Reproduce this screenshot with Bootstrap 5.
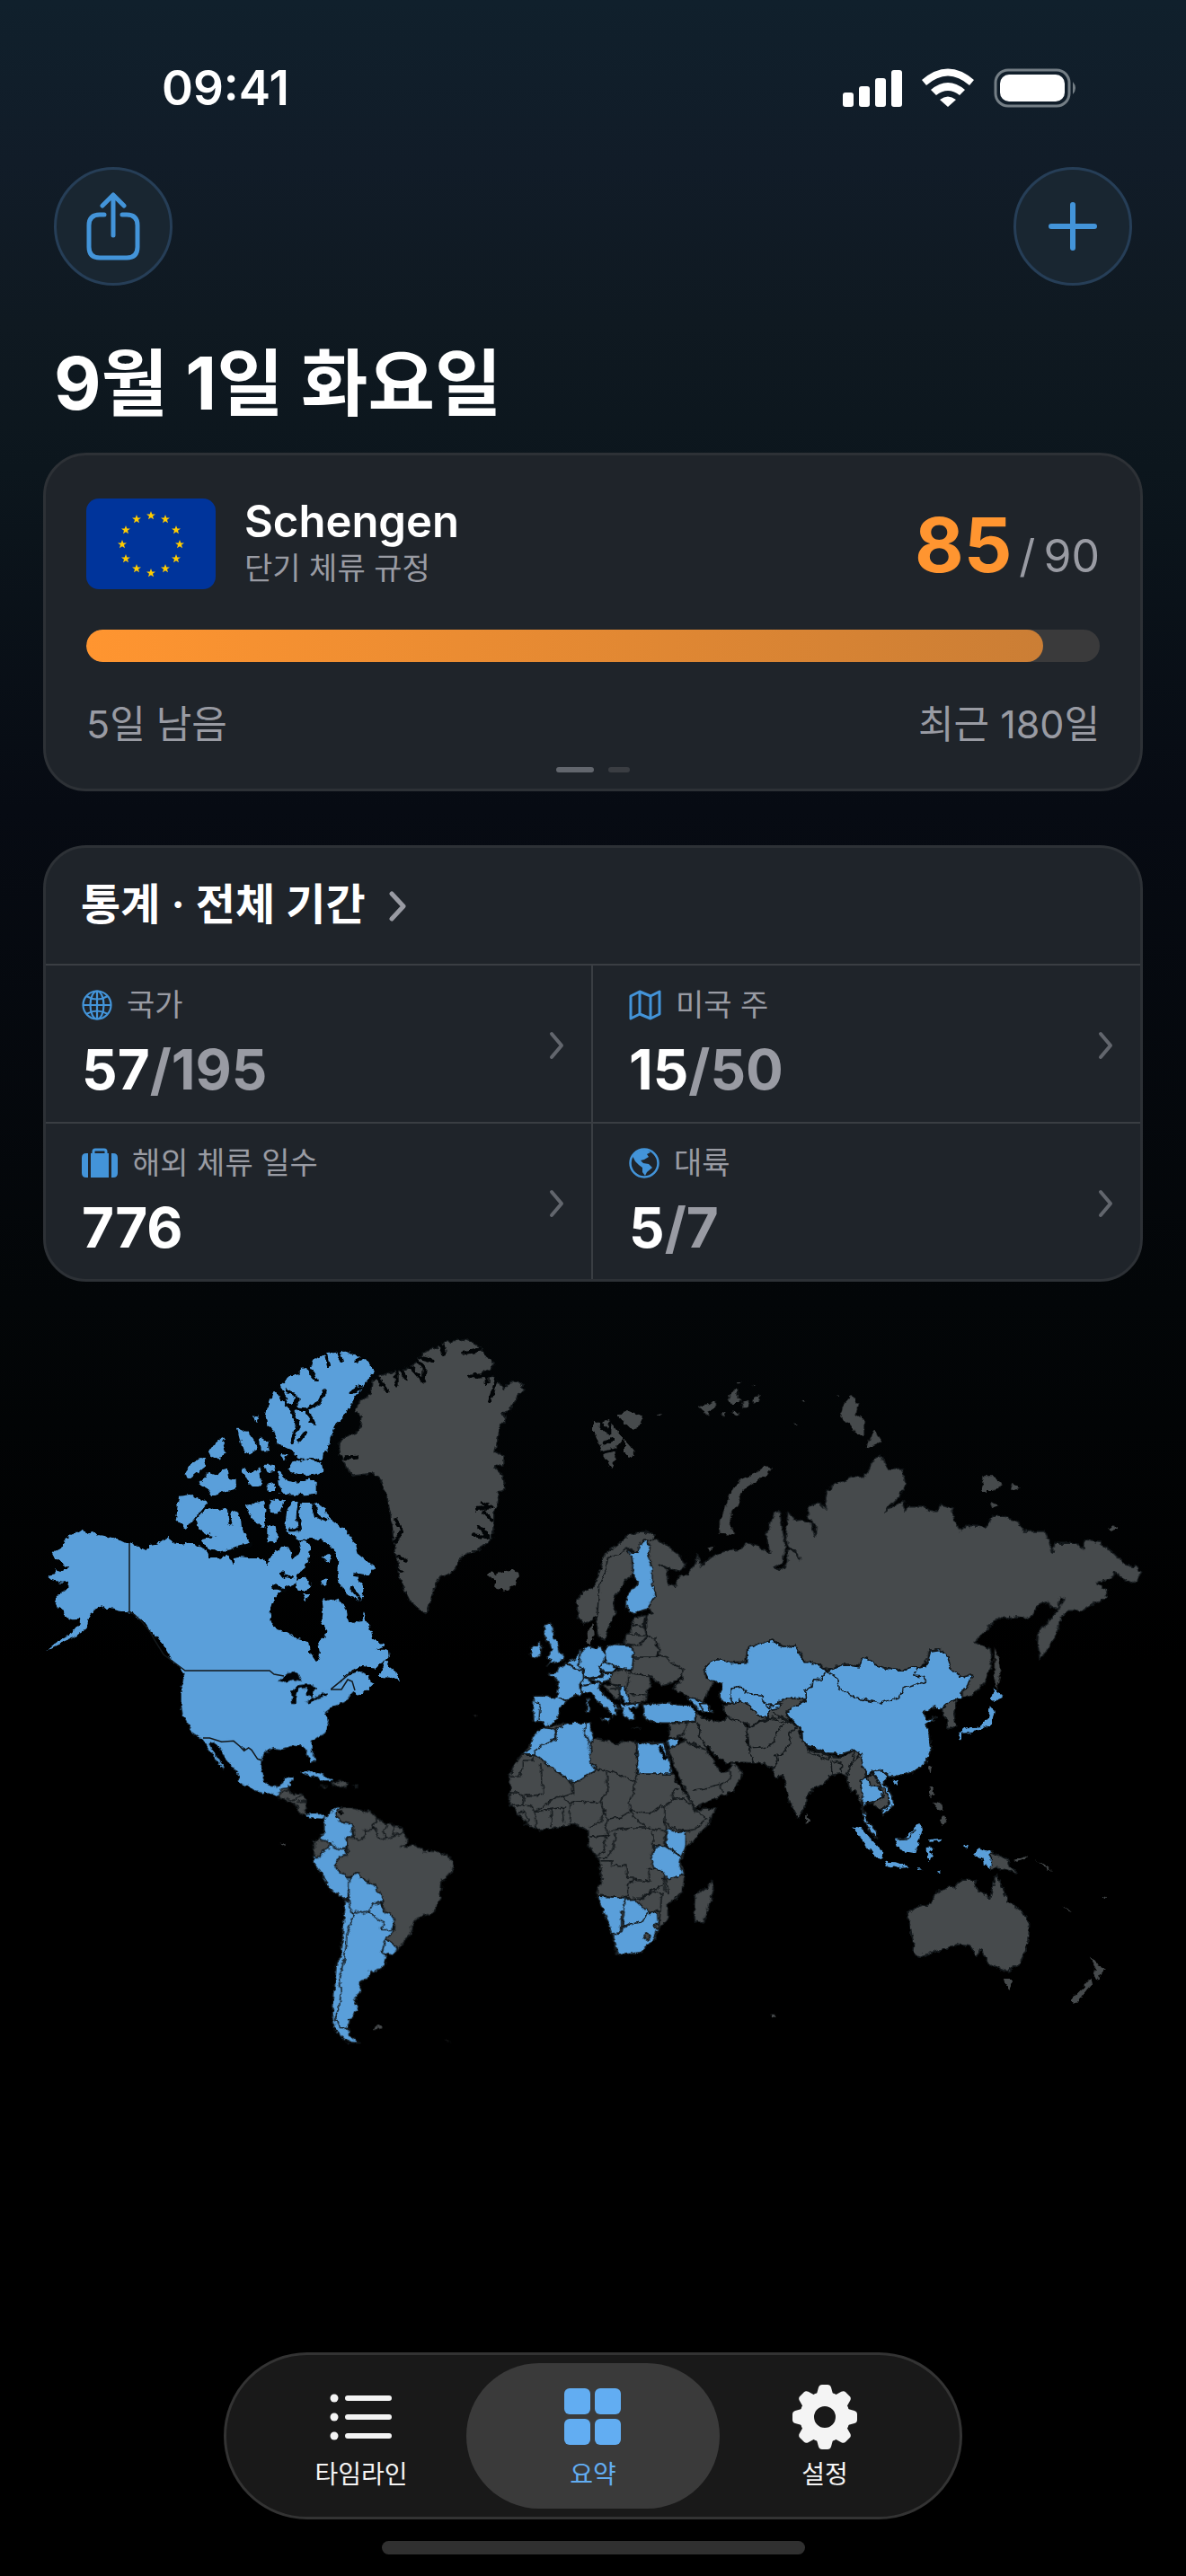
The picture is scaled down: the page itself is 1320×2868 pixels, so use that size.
<!DOCTYPE html>
<html lang="ko" data-bs-theme="dark">
<head>
<meta charset="utf-8">
<meta name="viewport" content="width=device-width, initial-scale=1">
<title>여행 요약</title>
<link href="https://cdn.jsdelivr.net/npm/bootstrap@5.3.0/dist/css/bootstrap.min.css" rel="stylesheet">
<style>
body{font-family:Inter,"Noto Sans CJK KR",sans-serif;color:#fff;background:#000 linear-gradient(180deg,#10202c 0,#111c28 180px,#0f1921 360px,#0c161d 520px,#070b13 900px,#030608 1450px,#000 1850px) no-repeat;min-height:100vh}
.screen{min-height:100vh}
.statusbar{height:186px;padding:10px 118px 0 180px}
.clock{font-size:53px;font-weight:600;line-height:64px}
.topbar{padding:0 60px}
.round-btn{width:132px;height:132px;border-radius:50%;background:#192631;border:3px solid #263e57;color:#4394d9}
.round-btn:hover{background:#20303d;color:#4394d9;border-color:#263e57}
.page-title{font-size:81px;font-weight:700;line-height:96px;margin:61px 0 0;padding:0 60px}
.panels{padding:0 48px}
.panel{background:#1f242a;border:3px solid #2d3136;border-radius:48px;overflow:hidden}
.rule-card{margin-top:29px;height:377px;padding:46px 45px 0}
.muted{color:#999ba3}
.flag{border-radius:14px}
.region{font-size:49px;font-weight:600;line-height:56px}
.sub-label{font-size:34px;line-height:48px}
.used{font-size:84px;font-weight:700;line-height:84px;color:#ff9530}
.limit{font-size:50px;line-height:50px}
.usage{height:36px;border-radius:18px;background:#3a3a3b;margin-top:44px}
.usage .progress-bar{border-radius:18px;background:linear-gradient(90deg,#ff9530,#cb7e35)}
.foot-text{font-size:43px;line-height:64px;margin-top:37px}
.dots{margin-top:16px}
.dot{height:6px;width:24px;border-radius:3px;background:#3a3d42}
.dot-on{width:42px;background:#62666d}
.stat-card{margin-top:60px}
.stat-head{height:131px;padding:0 39px;font-size:48px;font-weight:600;color:#fff;border-bottom:2px solid #3a3e43}
.stat-head span{line-height:64px;margin-bottom:4px}
.stat-cell{height:176px;padding:20px 0 0 40px;color:#fff;position:relative}
.stat-cell.low{height:173px}
.line-b{border-bottom:2px solid #3a3e43}
.line-r{border-right:2px solid #3a3e43}
.stat-name{font-size:34px;line-height:48px}
.stat-num{font-size:62px;font-weight:700;line-height:96px}
.chev{position:absolute;right:28px;top:72px}
.worldmap{margin-top:53px}
.worldmap path{vector-effect:non-scaling-stroke}
.b{fill:#5a9fda}.g{fill:#464a4c}
.land{stroke:#13181b;stroke-width:1.5;stroke-linejoin:round}
.arctic{stroke:#5a9fda;stroke-width:2}
.ln{fill:none;stroke:#13181b;stroke-width:1.5}
.sea{fill:none;stroke:#020507;stroke-width:4;stroke-linecap:round}
.tabs{width:822px;height:186px;border-radius:93px;background:#191919;border:3px solid #333;padding:9px}
.tab-btn{width:282px;height:162px;border-radius:81px;border:0;background:none;color:#f4f4f4;font-size:28px;line-height:40px;padding:6px 0 0}
.tab-btn+.tab-btn{margin-left:-24px}
.tab-btn svg{height:80px}
.tab-on{background:#3a3a3a;color:#62adf2}
.home{width:471px;height:15px;border-radius:8px;background:#303030;margin:24px auto}
</style>
<script src="https://cdn.jsdelivr.net/npm/bootstrap@5.3.0/dist/js/bootstrap.bundle.min.js"></script>
</head>
<body>
<div class="screen d-flex flex-column">
<header>
  <div class="statusbar d-flex justify-content-between align-items-center">
    <span class="clock">09:41</span>
    <svg width="264" height="44" viewBox="0 0 264 44" aria-hidden="true">
      <g fill="#fff"><rect y="27" width="12" height="16" rx="3"/><rect x="18" y="20" width="12" height="23" rx="3"/><rect x="36" y="11" width="12" height="32" rx="3"/><rect x="54" y="2" width="12" height="41" rx="3"/>
      <path d="M88 13Q117-12 146 13L141 19Q117-2 93 19ZM98 24Q117 8 136 24L130 30Q117 20 104 30ZM108 35Q117 28 126 35L117 43Z"/>
      <rect x="175" y="7" width="72" height="30" rx="10"/></g>
      <rect x="170" y="2" width="82" height="40" rx="14" fill="none" stroke="#747e85" stroke-width="3"/><path d="M256 15Q262 22 256 29Z" fill="#747e85"/>
    </svg>
  </div>
  <div class="topbar d-flex justify-content-between">
    <button class="round-btn btn p-0" type="button" aria-label="공유"><svg width="60" height="76" viewBox="0 0 60 76" fill="none" stroke="currentColor" stroke-width="5" stroke-linecap="round" stroke-linejoin="round"><path d="M20 25H15Q3 25 3 37V61Q3 73 15 73H45Q57 73 57 61V37Q57 25 45 25H40M30 48V3M18 15L30 3L42 15"/></svg></button>
    <button class="round-btn btn p-0" type="button" aria-label="추가"><svg width="56" height="56" viewBox="0 0 56 56" stroke="currentColor" stroke-width="6" stroke-linecap="round"><path d="M28 4V52M4 28H52"/></svg></button>
  </div>
  <h1 class="page-title">9월 1일 화요일</h1>
</header>
<main class="flex-grow-1">
  <div class="panels">
    <section class="panel rule-card">
      <div class="d-flex align-items-center">
        <svg class="flag me-3" width="144" height="101" viewBox="0 0 144 101" role="img" aria-label="EU">
          <rect width="144" height="101" fill="#00349b"/>
          <defs><path id="star" d="M0-5L1.300-1.500 5-1.500 2 .8 3 4.300 0 2.200-3 4.300-2 .8-5-1.500-1.300-1.500Z" fill="#fc0"/></defs>
          <use href="#star" x="72" y="19"/><use href="#star" x="88" y="23"/><use href="#star" x="100" y="35"/><use href="#star" x="104" y="51"/><use href="#star" x="100" y="67"/><use href="#star" x="88" y="78"/><use href="#star" x="72" y="83"/><use href="#star" x="56" y="78"/><use href="#star" x="44" y="67"/><use href="#star" x="40" y="51"/><use href="#star" x="44" y="35"/><use href="#star" x="56" y="23"/>
        </svg>
        <div class="ms-3"><div class="region">Schengen</div><div class="sub-label muted">단기 체류 규정</div></div>
        <div class="ms-auto pt-1 d-flex align-items-baseline"><span class="used">85</span><span class="limit muted ms-2">/&#8201;90</span></div>
      </div>
      <div class="progress usage" role="progressbar" aria-valuenow="85" aria-valuemin="0" aria-valuemax="90" aria-label="체류 일수"><div class="progress-bar" style="width:94.4%"></div></div>
      <div class="foot-text muted d-flex justify-content-between"><span>5일 남음</span><span>최근 180일</span></div>
      <div class="dots d-flex justify-content-center gap-3"><span class="dot dot-on"></span><span class="dot"></span></div>
    </section>
    <section class="panel stat-card">
      <a href="#stats" class="stat-head d-flex align-items-center text-decoration-none"><span>통계 · 전체 기간</span><svg class="ms-4" width="24" height="36" viewBox="0 0 24 36" fill="none" stroke="#999ba3" stroke-width="5" stroke-linecap="round" stroke-linejoin="round"><path d="M5 4L18 18L5 32"/></svg></a>
      <div class="row g-0">
        <a href="#countries" class="col-6 stat-cell line-b line-r text-decoration-none">
          <div class="stat-name muted d-flex align-items-center"><svg class="me-3" width="34" height="34" viewBox="0 0 34 34" fill="none" stroke="#4394d9" stroke-width="2.200"><circle cx="17" cy="17" r="15.500"/><ellipse cx="17" cy="17" rx="7.500" ry="15.500"/><path d="M17 1V33M1 17H33M5 7Q17 14 29 7M5 27Q17 20 29 27"/></svg>국가</div>
          <div class="stat-num">57<span class="muted">/195</span></div>
          <svg class="chev" width="20" height="34" viewBox="0 0 20 34" fill="none" stroke="#62666d" stroke-width="4" stroke-linecap="round" stroke-linejoin="round"><path d="M4 4L15 17L4 30"/></svg>
        </a>
        <a href="#states" class="col-6 stat-cell line-b text-decoration-none">
          <div class="stat-name muted d-flex align-items-center"><svg class="me-3" width="36" height="34" viewBox="0 0 36 34" fill="none" stroke="#4394d9" stroke-width="3" stroke-linejoin="round"><path d="M2 7L12 2L24 7L34 2V27L24 32L12 27L2 32ZM12 2V27M24 7V32"/></svg>미국 주</div>
          <div class="stat-num">15<span class="muted">/50</span></div>
          <svg class="chev" width="20" height="34" viewBox="0 0 20 34" fill="none" stroke="#62666d" stroke-width="4" stroke-linecap="round" stroke-linejoin="round"><path d="M4 4L15 17L4 30"/></svg>
        </a>
        <a href="#days" class="col-6 stat-cell low line-r text-decoration-none">
          <div class="stat-name muted d-flex align-items-center"><svg class="me-3" width="40" height="34" viewBox="0 0 40 34" fill="#4394d9"><path d="M5 6H7V33H5Q0 33 0 28V11Q0 6 5 6ZM33 6H35Q40 6 40 11V28Q40 33 35 33H33ZM10 6H30V33H10Z"/><path d="M13 7V4Q13 2 15 2H25Q27 2 27 4V7" fill="none" stroke="#4394d9" stroke-width="3"/></svg>해외 체류 일수</div>
          <div class="stat-num">776</div>
          <svg class="chev" width="20" height="34" viewBox="0 0 20 34" fill="none" stroke="#62666d" stroke-width="4" stroke-linecap="round" stroke-linejoin="round"><path d="M4 4L15 17L4 30"/></svg>
        </a>
        <a href="#continents" class="col-6 stat-cell low text-decoration-none">
          <div class="stat-name muted d-flex align-items-center"><svg class="me-3" width="34" height="34" viewBox="0 0 34 34"><circle cx="17" cy="17" r="15.500" fill="none" stroke="#4394d9" stroke-width="2.500"/><path d="M4 9Q10 1 20 2L24 5 20 7 22 10 17 13 13 14 16 17 22 18 26 22 20 27 18 31 15 27 15 22 11 19 7 15Z" fill="#4394d9"/></svg>대륙</div>
          <div class="stat-num">5<span class="muted">/7</span></div>
          <svg class="chev" width="20" height="34" viewBox="0 0 20 34" fill="none" stroke="#62666d" stroke-width="4" stroke-linecap="round" stroke-linejoin="round"><path d="M4 4L15 17L4 30"/></svg>
        </a>
      </div>
    </section>
  </div>
  <svg class="worldmap d-block w-100" viewBox="0 1480 1320 820" role="img" aria-label="방문한 국가 세계 지도">
    <defs><filter id="coast" x="-2%" y="-2%" width="104%" height="104%" color-interpolation-filters="sRGB"><feTurbulence type="fractalNoise" baseFrequency=".16" numOctaves="3" seed="4"/><feDisplacementMap in="SourceGraphic" scale="6" xChannelSelector="R" yChannelSelector="G"/></filter></defs>
    <g class="land" filter="url(#coast)">
      <!-- Arctic Canada, Alaska, Canada -->
      <g class="b" transform="translate(30 1470) scale(.33333)">
        <path stroke="none" d="M346 745 325 742 300 730 275 724 245 718 220 708 205 712 183 698 165 710 150 712 125 735 115 760 85 775 95 795 120 812 140 828 120 838 90 832 100 845 68 853 85 868 115 875 138 872 135 900 110 912 90 935 100 955 125 970 130 992 155 1000 178 998 175 1015 150 1045 100 1075 60 1105 110 1080 160 1058 200 1025 205 1000 225 965 250 952 262 962 290 965 310 972 346 972Z"/>
        <path stroke="none" d="M341 745 365 752 398 768 410 750 440 745 475 722 490 745 515 748 540 740 575 755 600 770 610 795 640 795 675 785 690 822 690 795 720 790 760 795 790 795 800 820 808 795 830 770 850 760 875 760 890 800 905 780 915 760 910 740 935 735 945 760 940 800 925 830 900 850 895 880 850 900 825 930 812 975 815 1005 835 1035 870 1042 905 1065 940 1075 945 1110 965 1140 978 1115 972 1075 995 1060 1000 1035 985 1005 990 965 985 930 1005 935 1030 930 1055 945 1065 970 1068 1000 1090 1015 1120 1000 1125 975 1135 1010 1150 1040 1155 1065 1180 1080 1195 1085 1165 1100 1205 1100 1208 1125 1195 1140 1165 1160 1120 1155 1090 1165 1060 1190 1040 1215 1070 1185 1110 1172 1145 1185 1140 1200 1160 1212 1135 1236 1110 1252 1090 1240 960 1275 880 1230 808 1185 530 1185 515 1160 490 1145 470 1110 450 1075 430 1055 400 1020 375 990 341 975Z"/>
        <path class="arctic" d="M1180 1188 1200 1140 1208 1160 1235 1180 1240 1200 1215 1190ZM848 215 880 190 905 185 915 165 945 160 965 130 1000 115 1060 107 1100 120 1130 135 1155 165 1140 190 1115 225 1080 275 1055 320 1025 350 1010 390 1005 430 985 435 980 465 960 455 935 460 905 455 895 435 870 425 840 410 830 370 805 350 800 320 810 280 825 240 845 265 875 270 860 240Z"/>
        <path class="arctic" d="M875 500 885 480 930 465 980 480 985 505 945 515 900 508ZM840 505 870 540 905 545 940 532 965 540 965 575 930 580 850 575ZM705 362 735 375 760 410 765 430 740 445 720 420ZM780 395 805 410 805 430 785 430ZM610 440 630 410 660 395 650 420 660 440 640 460 615 450ZM530 515 550 480 580 462 595 465 590 490 570 505 545 525ZM580 545 610 510 640 520 665 495 670 530 695 535 695 560 650 570 620 582 605 560ZM720 500 750 515 775 500 780 545 760 555 735 530ZM795 485 820 485 825 500 805 505ZM805 550 825 545 825 570 810 570ZM760 320 770 322 765 335ZM850 450 862 452 858 465Z"/>
        <path class="arctic" d="M510 590 545 585 600 610 575 640 555 665 530 695 515 675 500 670ZM570 665 600 630 640 635 665 630 680 645 690 640 710 655 715 700 740 740 725 755 690 760 640 770 600 755 585 735 640 722 600 710 575 695ZM735 620 790 605 795 650 790 690 765 670 745 645ZM815 600 855 605 840 640 815 640ZM805 690 825 685 835 720 825 740 805 735ZM870 640 885 612 960 612 990 625 1005 660 1060 700 1090 740 1100 780 1155 825 1140 850 1095 840 1120 900 1115 935 1070 915 1040 870 1045 800 1015 750 985 730 950 725 910 730 875 710 865 690ZM900 870 925 860 945 885 935 900 905 900ZM990 790 1012 785 1008 808ZM985 868 1005 870 990 882ZM925 915 942 920 930 930Z"/>
        <path class="sea" d="M850 262 885 295 935 298 975 275 995 235M930 300 960 345M885 300 905 350 885 405M885 295 905 260M940 160 968 200M1000 118 1008 150M1040 108 1050 135M1085 240 1115 222M870 235 895 250M1100 135 1120 125M910 400 930 375M910 612 905 655 912 700 880 700M955 615 965 655 1000 665M675 640 682 680M690 765 750 748M850 848 885 858M825 892 860 900M1095 850 1130 855M1085 895 1112 930"/>
      </g>
      <g transform="translate(170 1820) scale(.33333)">
        <path class="b" stroke="none" d="M112 118 388 118 400 124 430 131 480 145 540 205 595 178 640 180 655 150 668 155 675 185 660 200 640 225 600 240 575 260 590 285 578 325 545 345 530 355 530 380 543 420 530 428 520 405 510 380 490 370 460 372 430 382 400 378 370 395 365 424 345 422 320 385 270 362 168 350 130 325 115 290 100 265 95 230 95 180 100 145Z"/>
        <path class="b" stroke="none" d="M168 345 190 345 230 356 270 353 290 370 305 386 320 376 330 383 350 413 365 418 362 450 370 485 385 503 420 505 435 495 440 478 470 475 462 500 445 512 428 515 430 535 415 542 400 528 380 530 345 520 315 505 285 490 285 465 260 435 235 400 205 355 190 360 200 385 220 415 240 450 225 435 205 405 190 390 180 370Z"/>
        <path class="g" d="M420 545 430 515 455 512 460 530 500 532 510 545 510 580 515 605 495 600 480 570 450 555ZM598 497 630 488 655 500 640 508 615 508ZM560 505 580 505 575 512ZM670 505 685 505 680 512Z"/>
        <path class="arctic b" d="M515 602 545 602 572 604 570 612 550 610 525 610ZM500 458 530 458 565 469 596 486 570 487 540 470 505 463Z"/>
        <path class="b" d="M572 610 590 595 600 582 628 572 612 595 622 622 665 630 668 675 648 680 645 715 620 718 592 695 570 688 555 682 572 655ZM592 695 620 718 645 718 650 738 625 742 608 770 620 790 640 795 655 810 655 880 645 885 590 850 565 800 535 755 538 737 552 745 565 728 588 712ZM655 810 690 795 692 812 745 838 765 865 770 893 735 897 722 925 700 930 675 925 668 935 655 895 652 880ZM722 925 735 897 765 897 772 925 795 932 808 955 800 985 765 985 772 960 745 945ZM668 935 675 925 700 930 722 925 745 945 772 960 765 985 800 985 808 985 778 1015 765 1060 780 1075 778 1105 755 1120 725 1125 722 1150 695 1152 692 1195 670 1220 685 1243 668 1275 655 1285 652 1315 622 1315 610 1275 622 1250 628 1200 625 1150 635 1100 645 1050 648 1000 662 960ZM778 1015 800 1030 817 1048 805 1072 765 1062ZM645 885 655 895 668 935 662 960 648 1000 645 1050 635 1100 625 1150 628 1200 622 1250 610 1275 622 1315 655 1318 660 1340 690 1364 650 1361 610 1322 600 1260 608 1160 612 1110 630 1060 635 980 642 900Z"/>
        <path class="g" d="M628 572 630 578 660 580 700 590 730 592 748 610 740 635 730 650 705 655 710 672 690 687 672 678 665 630 645 625 622 622 612 595ZM748 610 770 630 800 635 830 645 840 660 832 668 810 675 770 682 755 680 745 650 735 640ZM538 690 555 682 592 695 590 710 565 728 550 745 538 735Z"/>
        <path class="g" d="M648 680 668 675 690 687 710 672 705 655 735 650 745 648 755 680 775 682 805 672 832 665 838 655 850 685 840 710 870 700 905 722 960 725 985 742 1002 750 1002 785 965 825 960 880 935 930 900 940 868 960 860 1000 820 1050 800 1030 778 1015 808 985 808 950 790 930 772 925 770 890 765 865 748 860 745 838 715 820 692 812 690 795 670 800 650 808 620 790 608 770 625 742 650 738Z"/>
        <path class="ln" d="M445 545 470 555 500 535M480 560 510 555M780 635 770 660 780 680M808 635 805 672M430 530 455 515M825 710 845 695"/>
        <path class="g" stroke="none" d="M738 1308 770 1306 768 1316 742 1317ZM975 1350 995 1362 985 1358ZM425 695 445 700 440 708ZM1070 268 1085 270 1080 273Z"/>
        <path fill="#010305" stroke="none" d="M420 155 455 125 485 128 498 155 470 150 440 158ZM465 228 462 190 485 168 530 165 548 180 535 188 532 210 515 200 515 178 490 180 478 200 476 228ZM508 230 530 212 582 192 580 205 550 212 520 232ZM622 590 632 585 636 600 626 602Z"/>
      </g>
      <!-- Greenland, Iceland, Scandinavia -->
      <g class="g" transform="translate(360 1470) scale(.33333)">
        <path d="M52 410 70 390 110 375 125 350 130 320 105 305 115 280 160 245 165 205 185 185 240 170 270 165 310 140 330 110 365 95 395 85 405 72 470 63 500 75 530 95 550 125 570 145 560 165 530 175 575 190 600 230 625 205 655 210 672 232 640 265 620 300 600 310 610 330 590 350 578 400 570 440 600 450 600 480 570 490 600 520 605 560 580 575 585 600 570 640 565 730 535 755 500 775 460 785 450 815 430 840 390 855 375 880 360 930 345 980 320 965 290 940 270 900 250 850 245 800 235 740 225 660 215 600 195 540 165 510 130 515 100 520 75 490 65 460 50 430Z"/>
        <path class="sea" d="M465 110 525 98M488 188 560 180M555 270 580 195M180 192 212 237M245 165V215M260 165 278 198M290 155 335 205 338 160 315 135M325 125 365 135M395 85 402 110M75 460 112 458M510 630 560 625 530 610M560 665 535 640M500 718 555 725 520 690M545 180V208M240 665 262 700 240 740M250 790 272 800M245 820 262 840"/>
        <path stroke="none" d="M545 850 565 840 575 850 600 838 640 832 650 860 640 885 600 902 570 890 575 870ZM900 335 925 345 950 330 970 350 1000 395 980 420 975 460 962 495 935 450 920 410 900 370ZM985 320 1010 300 1068 320 1050 360 1030 365ZM1005 400 1040 440 1020 460 1005 440ZM1112 316 1132 312 1120 320ZM878 1040 902 1015 905 1050 890 1085 880 1070Z"/>
        <path class="sea" d="M925 345 945 370M955 340V378M935 412 965 398M935 440 975 430"/>
        <path d="M845 935 870 905 905 890 925 830 940 780 980 750 1020 715 1070 705 1105 715 1095 745 1070 735 1060 755 1050 775 1010 760 985 785 950 790 940 840 920 890 915 980 900 1000 870 1015 850 990ZM950 790 985 785 1010 760 1030 790 1035 850 1010 865 990 900 970 930 975 975 955 1020 940 1065 922 1060 910 1010 915 980 920 890 940 840Z"/>
      </g>
      <!-- Russia and its Arctic islands -->
      <g class="g" transform="translate(600 1480) scale(.44643 .33333)">
        <path d="M272 705 290 700 320 725 350 755 365 785 355 808 325 800 298 783 320 805 320 850 340 860 345 830 370 815 390 780 395 750 405 790 430 760 465 740 505 735 515 710 545 725 575 748 565 690 585 615 600 610 605 650 610 690 615 730 605 780 585 795 605 803 620 780 620 735 635 740 650 770 640 740 620 725 615 690 620 610 640 640 655 635 680 650 688 695 690 660 670 625 670 590 700 580 715 600 715 545 740 515 780 495 810 490 820 475 835 430 850 420 870 465 905 465 915 520 900 555 860 610 905 575 915 610 920 590 950 590 975 605 995 605 1000 585 1030 600 1035 640 1052 675 1065 655 1115 660 1130 625 1155 625 1190 640 1210 675 1260 675 1272 710 1280 745 1285 715 1340 715 1355 735 1360 705 1400 712 1430 745 1460 785 1490 795 1500 815 1480 850 1450 830 1435 810 1425 835 1390 845 1415 870 1415 895 1385 915 1355 940 1320 940 1300 965 1290 1020 1265 1075 1248 1105 1243 1040 1245 1010 1275 970 1310 900 1300 895 1295 930 1275 930 1270 910 1245 920 1230 955 1215 965 1190 960 1140 965 1115 1005 1085 1045 1110 1060 1125 1070 1130 1110 1110 1180 1080 1225 1055 1230 1055 1200 1075 1160 1055 1165 1025 1130 1010 1090 990 1070 970 1078 968 1105 950 1130 925 1130 890 1140 860 1130 835 1118 825 1103 805 1098 800 1122 765 1118 722 1138 690 1115 665 1110 640 1060 620 1070 590 1042 520 1062 515 1110 480 1112 440 1103 412 1130 415 1165 435 1180 420 1215 410 1250 380 1235 355 1215 335 1200 358 1165 355 1135 320 1115 300 1090 295 1050 270 1025 265 985 270 950 285 945 270 935 290 888 278 850 280 790 270 740Z"/>
        <path stroke="none" d="M450 680 450 640 465 590 480 540 500 505 540 480 560 455 577 460 570 485 530 515 505 545 495 585 480 610 475 650 488 685ZM750 290 760 250 780 218 795 250 790 285 810 300 810 355 790 350 770 315ZM835 335 855 375 815 400ZM1105 490 1135 490 1155 520 1130 540 1105 540ZM1175 515 1200 530 1180 540ZM1125 575 1145 590 1130 598ZM1418 668 1435 655 1442 668 1428 674ZM1136 1060 1146 1100 1150 1150 1142 1205 1135 1150ZM420 730 435 725 428 740ZM400 255 420 250 438 240 440 262 420 275 425 290 405 272ZM485 200 495 200 494 225 505 240 485 250 470 240ZM505 245 525 240 520 262 508 262ZM530 235 548 222 548 240 535 248ZM455 275 465 280 458 290ZM478 275 500 275 492 290ZM496 177 505 177 500 182ZM530 185 540 187 533 190ZM655 236 665 238 660 243ZM740 220 750 222 745 226ZM635 315 645 320 638 322Z"/>
      </g>
      <!-- Europe, Africa, Middle East -->
      <g transform="translate(540 1780) scale(.33333)">
        <path class="b" d="M470 -170 490 -155 510 -155 520 -190 538 -195 550 -170 545 -140 558 -100 558 -50 570 -10 540 35 495 48 472 35 472 -10 510 -50 495 -80 490 -140Z"/>
        <path class="b" d="M195 110 200 85 218 80 228 100 230 130 245 155 250 180 265 185 260 205 230 215 205 222 225 200 208 195 225 170 215 150 200 130ZM155 160 185 145 190 165 180 195 155 200 150 185ZM210 250 240 245 245 232 270 212 300 232 330 242 328 270 315 285 318 320 300 325 275 335 240 330 243 290 235 265ZM160 325 200 325 240 330 275 338 250 365 245 395 225 415 205 425 185 410 162 408 160 370ZM315 180 330 168 345 160 365 165 390 158 400 185 402 210 378 228 388 255 350 265 325 262 325 235 312 225ZM275 212 300 200 310 175 322 172 315 225 328 240 300 232ZM400 165 430 152 490 155 495 200 490 235 460 235 425 220 400 210ZM378 228 405 212 440 230 425 245 395 245ZM350 268 388 262 395 250 425 250 415 272 385 280ZM318 285 328 265 350 270 355 285 335 290ZM325 290 355 285 385 280 380 300 400 325 430 350 450 368 435 370 440 385 425 395 415 375 385 350 350 310 320 315ZM385 400 415 398 412 412ZM340 330 347 330 348 380 338 380Z"/>
        <path class="g" d="M500 62 538 55 530 90 540 125 515 155 465 150 470 120 490 110 490 85ZM515 155 545 125 568 130 572 155 585 170 570 195 495 195 492 155ZM495 195 570 195 600 190 620 210 660 235 655 262 610 285 590 290 570 275 545 255 500 255 480 248 492 235ZM425 245 460 235 480 240 490 253 545 255 555 290 540 310 535 345 485 350 470 310 450 290 420 285 415 270ZM390 288 420 285 447 295 450 340 430 325 405 300Z"/>
        <path class="b" d="M447 290 460 290 475 310 482 345 470 350 460 330 450 325ZM450 345 465 355 500 350 520 352 505 362 485 365 500 400 485 405 465 390 455 370ZM525 352 560 355 600 345 650 355 685 355 700 370 705 405 660 410 620 415 590 415 550 410 530 395 530 370ZM670 330 715 340 745 355 762 380 735 375 715 375 700 355ZM490 430 515 430 512 434Z"/>
        <path class="ln" d="M165 345 185 347 180 405M470 120 535 120M490 88 532 92M480 260 470 310M485 320 535 320M415 300 445 300"/>
        <path class="g" d="M125 520 100 550 80 590 85 650 80 680 110 720 145 755 175 770 250 765 300 750 345 775 345 830 380 870 388 935 372 990 400 1050 425 1120 440 1188 510 1182 560 1145 585 1095 610 1070 610 1020 660 980 665 930 655 880 670 830 740 760 772 700 700 705 690 680 640 610 625 580 600 480 505 480 460 475 445 488 360 465 280 415 190 430Z"/>
        <path class="ln" d="M125 523 162 523 162 540 127 540 127 570 115 590 80 592M185 552 195 655 130 658M85 645 110 645 130 665 125 685 80 690M165 520 290 615 293 650 260 660 235 662 205 685 165 710M260 660 280 680 320 675 355 680 385 678 410 640 405 575M125 690 155 692 165 710 170 765M220 705 222 760M260 700 265 750M285 685 280 750M170 710 205 705 270 695M110 715 130 712 145 740 130 755M385 680 400 710 385 740 350 765M395 705 410 735 450 730 485 710 480 680 495 650 497 608M410 735 400 760 415 790 350 795M485 710 500 730 540 765 600 775M415 780 440 770 500 765 540 765M485 700 510 712 555 715 585 690 600 700 600 740 605 765M600 700 625 670 660 665 690 690 705 710 740 735 700 770 670 775 620 765 600 740M625 670 630 640 645 635M508 585H625M350 795 400 795 400 840 375 860M435 780 430 830 405 865 380 865M385 875 420 875 425 890 470 890 475 930 495 930 495 945 475 950 475 1000M495 935 550 945 545 905 570 900M560 775 560 840 555 880M560 825H600V775M475 1000 520 1000 560 970 590 960 600 920M515 1005 560 978 590 985 585 1040 550 1048M372 990 490 1000M605 935 612 985 600 980 600 930M585 1040 580 1095"/>
        <path class="g" d="M352 490 362 465 410 475 445 488 460 475 505 478 505 608 495 608 410 572 370 570 350 545ZM700 990 740 965 758 940 765 965 730 1080 700 1075 698 1040Z"/>
        <path class="b" d="M190 430 230 435 235 468 195 485 165 505 162 522 125 520 150 500 160 460ZM235 435 280 415 335 415 330 445 345 470 352 500 350 545 370 570 300 615 290 612 165 520 165 505 195 485 240 468ZM335 415 355 410 352 435 362 465 350 490 345 470 330 445ZM508 480 560 485 595 480 605 510 625 580 620 585 508 585ZM605 765 640 778 670 775 670 825 655 860 605 825ZM565 828 600 826 655 862 650 890 660 925 610 935 595 910 565 900 553 870ZM372 993 480 1000 465 1005 465 1045 455 1050 455 1115 422 1118 400 1055ZM467 1005 500 1003 545 1048 520 1080 485 1085 465 1098 458 1075 465 1045ZM425 1120 455 1115 460 1098 485 1085 520 1080 545 1048 575 1050 578 1100 560 1145 515 1182 445 1190Z"/>
        <path class="g" d="M528 1130 540 1118 552 1125 540 1140ZM565 1090 578 1085 578 1102 567 1102ZM610 505 640 485 670 475 740 505 775 560 790 580 815 575 825 545 860 585 830 640 760 670 700 700 690 680 650 600ZM615 418 705 408 720 440 735 475 740 505 690 490 670 472 650 460 615 465Z"/>
        <path class="b" d="M605 475 615 470 648 462 640 485 615 502Z"/>
        <path class="ln" d="M675 412 665 450 625 465M690 640 740 632 785 618 815 605 820 575M785 618 792 645"/>
        <path class="sea" d="M585 498 603 530"/>
      </g>
      <!-- Asia and Oceania -->
      <g transform="translate(760 1780) scale(.33333)">
        <path class="g" d="M45 380 60 395 90 405 130 412 150 395 200 410 215 430 212 480 222 500 235 548 170 545 150 550 110 525 85 495 75 490 55 455 58 430 45 410ZM135 355 162 350 190 340 215 350 250 385 280 402 250 410 230 425 200 410 150 395 140 380ZM315 350 345 332 410 335 370 365 345 380 355 410 320 410 285 400 290 372ZM215 430 230 425 280 405 320 395 355 410 320 435 300 485 270 498 222 500ZM222 500 270 498 300 485 320 435 355 410 385 430 350 450 360 480 335 520 310 525 315 560 290 565 275 550 235 548ZM315 560 310 525 335 520 360 480 350 450 385 430 400 480 420 505 490 525 530 530 575 505 590 520 560 560 545 590 520 585 490 590 470 620 415 650 408 700 382 732 360 690 335 590 310 595 295 570ZM575 505 598 520 600 560 615 590 592 610 600 650 595 690 580 640 560 645 545 590 560 560Z"/>
        <path class="b" d="M55 350 85 350 92 380 70 378ZM70 235 85 220 100 205 140 203 160 215 215 212 218 160 300 138 320 155 350 165 375 155 405 212 440 212 480 240 465 268 435 270 432 295 408 305 410 335 345 332 315 350 300 355 285 365 265 340 265 322 220 318 195 295 162 300 162 350 135 345 120 320 130 300 130 280 110 280 90 275ZM162 350 162 300 195 295 220 318 265 322 265 340 290 355 330 350 320 365 290 370 280 400 250 385 215 350 190 340Z"/>
        <path class="b" d="M480 240 515 265 520 300 560 320 575 332 660 348 720 330 735 300 815 275 800 260 770 258 780 232 810 228 825 175 855 170 880 180 895 230 930 262 965 255 950 300 930 305 930 330 890 345 860 370 835 360 800 385 815 402 850 395 810 420 825 450 830 500 810 550 770 578 720 592 690 590 665 572 615 585 600 555 595 520 575 505 530 518 480 515 420 490 400 480 398 440 385 430 355 395 345 378 370 365 410 340 408 305 432 295 435 270 465 268ZM485 243 530 218 590 228 600 195 630 205 640 220 700 238 740 238 775 225 780 232 770 258 800 260 815 275 735 300 720 330 660 348 575 332 560 320 520 300 515 265Z"/>
        <path class="ln" d="M410 490 490 525 490 538 415 512ZM498 518 528 520 525 532 500 530M495 540 530 550 530 590M495 540 498 590M300 380 350 405M880 390 910 385"/>
        <path class="b" stroke="none" d="M1040 298 1052 315 1072 325 1055 332 1040 346 1030 330ZM1025 358 1040 375 1030 420 985 442 930 446 932 475 922 470 922 450 945 430 990 428 1020 400ZM945 448 965 450 955 456ZM704 608 720 608 712 624ZM565 762 600 770 640 815 670 845 668 870 640 860 600 810ZM672 878 710 880 758 896 720 900 680 890ZM708 800 740 800 770 770 790 750 800 765 790 800 775 850 720 840ZM815 830 840 830 825 845 838 865 828 862 824 880 816 865ZM822 805 862 800 860 808 825 812ZM970 850 990 835 1030 845 1030 903 1005 890 1000 865 975 860ZM935 825 955 825 950 834ZM850 915 862 910 855 918ZM785 900 800 903 790 906Z"/>
        <path class="b" d="M592 610 615 590 625 625 660 630 668 665 635 680 610 680 600 700 625 755 645 775 650 802 625 775 605 740 598 700 600 650ZM635 580 665 572 685 590 670 615 700 660 705 690 668 722 665 705 690 690 685 655 655 615Z"/>
        <path class="g" d="M865 370 890 345 918 340 905 380 912 425 885 435 880 400 870 390ZM615 595 635 585 655 615 685 655 690 690 660 705 640 690 638 675 668 665 660 630 625 625ZM1030 845 1080 870 1095 895 1120 918 1080 905 1045 900 1030 903Z"/>
        <path class="g" stroke="none" d="M1105 872 1135 865 1150 855 1140 872 1115 878ZM412 720 425 745 410 752ZM822 560 832 555 826 585ZM824 630 835 630 838 655 826 660ZM835 680 865 685 870 710 850 705ZM855 745 870 722 880 750 865 755ZM1175 870 1200 885 1240 915 1210 898ZM1270 1025 1300 1048 1285 1042ZM1402 995 1414 995 1408 1003ZM295 1388 308 1388 302 1396ZM1070 1272 1105 1272 1090 1305ZM1360 1190 1385 1225 1410 1235 1380 1275 1370 1255 1378 1235ZM1360 1270 1365 1290 1310 1355 1295 1340 1340 1295Z"/>
        <path class="g" d="M750 1050 780 1030 830 1015 850 980 890 960 910 965 930 940 980 940 975 965 1025 1000 1035 960 1045 920 1060 950 1085 1010 1130 1045 1157 1085 1155 1140 1125 1220 1085 1245 1025 1225 1010 1200 995 1170 980 1195 960 1160 915 1155 860 1175 790 1195 768 1185 770 1150Z"/>
        <path class="ln" d="M715 803 755 800 775 770M625 680 665 668M612 745 630 755"/>
      </g>
    </g>
    <g class="ln">
      <path d="M144 1718V1794L150 1798Q166 1812 172 1826L182 1842L206 1860H300L305 1864L316 1866M368 1881H380L387 1870L392 1872L395 1882"/>
      <path transform="translate(170 1820) scale(.33333)" d="M168 345H190L230 358 270 355 290 372 305 388 320 378 330 385 350 415 365 420M595 182 640 145 675 115"/>
    </g>
  </svg>
</main>
<footer>
  <nav class="tabs mx-auto d-flex" aria-label="탭">
    <button class="tab-btn" type="button"><svg class="d-block mx-auto" width="70" height="80" viewBox="0 0 70 80" fill="currentColor"><circle cx="5" cy="15" r="4.500"/><circle cx="5" cy="36" r="4.500"/><circle cx="5" cy="57" r="4.500"/><path d="M20 15H66M20 36H66M20 57H66" stroke="currentColor" stroke-width="6" stroke-linecap="round"/></svg>타임라인</button>
    <button class="tab-btn tab-on" type="button" aria-current="page"><svg class="d-block mx-auto" width="64" height="80" viewBox="0 0 64 80" fill="currentColor"><rect y="4" width="29" height="29" rx="6"/><rect x="34" y="4" width="29" height="29" rx="6"/><rect y="38" width="29" height="29" rx="6"/><rect x="34" y="38" width="29" height="29" rx="6"/></svg>요약</button>
    <button class="tab-btn" type="button"><svg class="d-block mx-auto" width="72" height="80" viewBox="-36 -36 72 80" fill="currentColor"><defs><path id="tooth" d="M-10-22L-7-33Q-6-36-3-36H3Q6-36 7-33L10-22Z"/></defs><circle r="20" fill="none" stroke="currentColor" stroke-width="16"/><use href="#tooth"/><use href="#tooth" transform="rotate(45)"/><use href="#tooth" transform="rotate(90)"/><use href="#tooth" transform="rotate(135)"/><use href="#tooth" transform="rotate(180)"/><use href="#tooth" transform="rotate(225)"/><use href="#tooth" transform="rotate(270)"/><use href="#tooth" transform="rotate(315)"/></svg>설정</button>
  </nav>
  <div class="home"></div>
</footer>
</div>
</body>
</html>
